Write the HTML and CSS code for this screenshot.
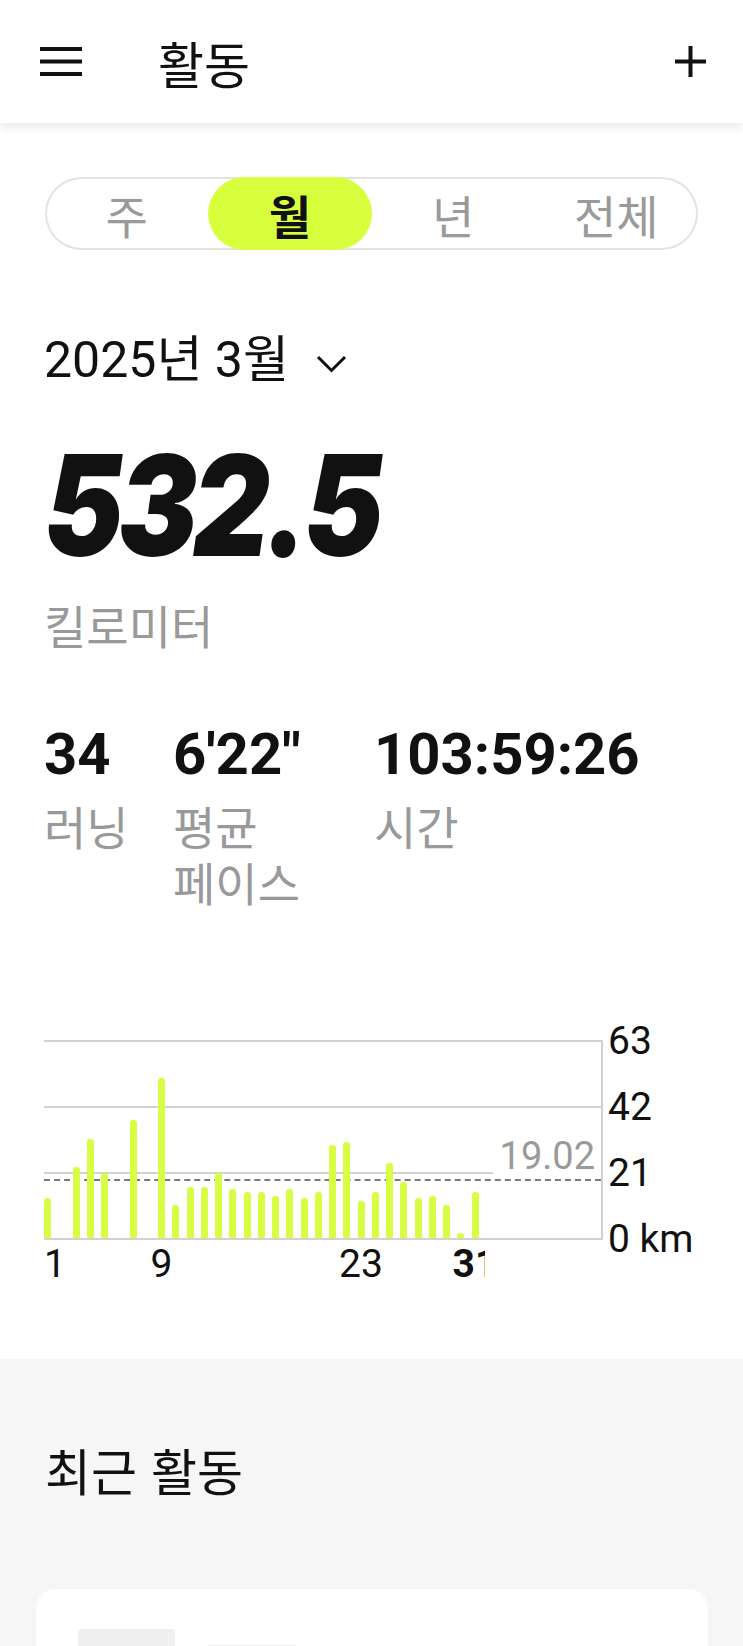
FILE: index.html
```html
<!DOCTYPE html>
<html lang="ko">
<head>
  <meta charset="UTF-8">
  <title>활동</title>
  <link rel="stylesheet" href="styles.css">
</head>
<body>

  <!-- 상단 바 -->
  <header class="topbar">
    <svg class="menu-icon" width="42" height="29" viewBox="0 0 42 29">
      <rect x="0" y="0" width="42" height="4" fill="#111"/>
      <rect x="0" y="12.5" width="42" height="4" fill="#111"/>
      <rect x="0" y="25" width="42" height="4" fill="#111"/>
    </svg>
    <h1 class="title">활동</h1>
    <svg class="add-icon" width="31" height="31" viewBox="0 0 31 31">
      <rect x="13.5" y="0" width="4" height="31" fill="#111"/>
      <rect x="0" y="13.5" width="31" height="4" fill="#111"/>
    </svg>
  </header>

  <main class="summary">
    <div class="tabs">
      <div class="tab">주</div>
      <div class="tab active">월</div>
      <div class="tab">년</div>
      <div class="tab">전체</div>
    </div>

    <div class="period">
      <span>2025년 3월</span>
      <svg class="chevron" width="31" height="18" viewBox="0 0 31 18">
        <polyline points="2,2 15.5,15.5 29,2" fill="none" stroke="#111" stroke-width="3"/>
      </svg>
    </div>

    <div class="distance">532.5</div>
    <div class="unit">킬로미터</div>

    <div class="stats">
      <div class="stat">
        <div class="stat-value">34</div>
        <div class="stat-label">러닝</div>
      </div>
      <div class="stat">
        <div class="stat-value">6'22"</div>
        <div class="stat-label">평균<br>페이스</div>
      </div>
      <div class="stat">
        <div class="stat-value">103:59:26</div>
        <div class="stat-label">시간</div>
      </div>
    </div>

    <!-- 일별 거리 차트 -->
    <div class="chart">
      <div class="chart-col">
        <div class="plot">
          <div class="band"></div>
          <div class="band short"><div class="short-line"></div></div>
          <div class="band"></div>

          <div class="avg-line"></div>
          <div class="avg-label">19.02</div>

          <div class="bars">
            <div class="bar" style="height:39.6px"></div>
            <div class="bar" style="height:0"></div>
            <div class="bar" style="height:71.3px"></div>
            <div class="bar" style="height:99px"></div>
            <div class="bar" style="height:65px"></div>
            <div class="bar" style="height:0"></div>
            <div class="bar" style="height:117.9px"></div>
            <div class="bar" style="height:0"></div>
            <div class="bar" style="height:159.7px"></div>
            <div class="bar" style="height:33px"></div>
            <div class="bar" style="height:51.5px"></div>
            <div class="bar" style="height:51.5px"></div>
            <div class="bar" style="height:65px"></div>
            <div class="bar" style="height:49px"></div>
            <div class="bar" style="height:46.5px"></div>
            <div class="bar" style="height:46.5px"></div>
            <div class="bar" style="height:42.4px"></div>
            <div class="bar" style="height:49px"></div>
            <div class="bar" style="height:39.6px"></div>
            <div class="bar" style="height:46.2px"></div>
            <div class="bar" style="height:93.3px"></div>
            <div class="bar" style="height:96.2px"></div>
            <div class="bar" style="height:36.8px"></div>
            <div class="bar" style="height:46.2px"></div>
            <div class="bar" style="height:74.8px"></div>
            <div class="bar" style="height:55.6px"></div>
            <div class="bar" style="height:39.9px"></div>
            <div class="bar" style="height:42.4px"></div>
            <div class="bar" style="height:33px"></div>
            <div class="bar" style="height:5px"></div>
            <div class="bar" style="height:46.2px"></div>
          </div>
        </div>

        <div class="xlabels">
          <span class="xl xl-1">1</span>
          <span class="xl xl-9">9</span>
          <span class="xl xl-23">23</span>
          <span class="xl xl-31">31</span>
        </div>
      </div>

      <div class="ylabels">
        <div>63</div>
        <div>42</div>
        <div>21</div>
        <div>0 km</div>
      </div>
    </div>
  </main>

  <section class="recent">
    <h2 class="recent-title">최근 활동</h2>
    <div class="card">
      <div class="thumb"></div>
      <div class="line-ph"></div>
    </div>
  </section>

</body>
</html>
```

FILE: styles.css
```css
body {
  margin: 0;
  background-color: #ffffff;
  color: #111;
  font-family: Roboto, "Noto Sans CJK KR", sans-serif;
  width: 743px;
}

/* 상단 바 */
.topbar {
  display: flex;
  align-items: center;
  height: 123px;
  padding: 0 37px 0 40px;
  background-color: #fff;
  box-shadow: 0 4px 10px rgba(0, 0, 0, 0.09);
  position: relative;
  z-index: 1;
}

.title {
  flex: 1;
  margin: 0 0 0 76px;
  font-family: "Noto Sans CJK KR", sans-serif;
  font-size: 50px;
  font-weight: 400;
  line-height: 60px;
}

.summary {
  padding: 0 45px 72px 44px;
}

/* 주 / 월 / 년 / 전체 */
.tabs {
  display: grid;
  grid-template-columns: repeat(4, 1fr);
  height: 73px;
  margin: 54px 0 0 1px;
  border-radius: 37px;
  box-shadow: inset 0 0 0 2px #e3e3e3;
}

.tab {
  display: flex;
  align-items: center;
  justify-content: center;
  font-family: "Noto Sans CJK KR", sans-serif;
  font-size: 46px;
  color: #9a9a9a;
  border-radius: 37px;
}

.tab.active {
  background-color: #d8ff3e;
  color: #111;
  font-weight: 700;
}

.period {
  display: flex;
  align-items: center;
  margin-top: 82px;
  font-size: 50px;
  line-height: 56px;
}

.chevron {
  margin-left: 27px;
  margin-top: 8px;
}

.distance {
  margin-top: 47px;
  font-family: Inter, sans-serif;
  font-size: 140px;
  font-weight: 900;
  font-style: italic;
  line-height: 140px;
  letter-spacing: -6px;
  transform: scaleX(0.85);
  transform-origin: left center;
}

.unit {
  margin-top: 21px;
  font-family: "Noto Sans CJK KR", sans-serif;
  font-size: 46px;
  line-height: 56px;
  color: #999;
}

.stats {
  display: grid;
  grid-template-columns: 129px 201px auto;
  margin-top: 67px;
}

.stat-value {
  font-size: 58px;
  font-weight: 700;
  line-height: 70px;
}

.stat-label {
  margin-top: 8px;
  font-family: "Noto Sans CJK KR", sans-serif;
  font-size: 46px;
  line-height: 56px;
  color: #999;
}

/* 차트 */
.chart {
  display: flex;
  margin-top: 131px;
}

.plot {
  position: relative;
  width: 557px;
  border-top: 2px solid #d2d2d2;
  border-right: 2px solid #d2d2d2;
}

.band {
  height: 64px;
  border-bottom: 2px solid #d2d2d2;
}

.band.short {
  display: flex;
  align-items: flex-end;
  border-bottom: none;
  height: 66px;
}

.short-line {
  width: 449px;
  border-bottom: 2px solid #d2d2d2;
}

.avg-line {
  position: absolute;
  left: 0;
  right: 0;
  top: 137px;
  border-top: 2px dashed #7a7a7a;
}

.avg-label {
  position: absolute;
  right: 6px;
  top: 95px;
  font-size: 38px;
  line-height: 38px;
  color: #9a9a9a;
}

.bars {
  position: absolute;
  left: 0;
  bottom: 2px;
  display: flex;
  align-items: flex-end;
  gap: 7.25px;
}

.bar {
  width: 7px;
  background-color: #d8fd45;
  border-radius: 3px 3px 0 0;
}

/* 날짜 축: 막대와 같은 31칸 격자 */
.xlabels {
  display: grid;
  grid-template-columns: repeat(33, 7px);
  column-gap: 7.25px;
  width: 441px;
  margin-top: 1px;
  overflow: hidden;
  font-size: 39px;
  line-height: 46px;
}

.xl {
  grid-row: 1;
  text-align: center;
}

.xl-1 {
  grid-column: 1 / span 3;
  text-align: left;
}

.xl-9 {
  grid-column: 7 / span 5;
}

.xl-23 {
  grid-column: 21 / span 5;
}

.xl-31 {
  grid-column: 29 / span 5;
  font-weight: 700;
}

.ylabels {
  display: flex;
  flex-direction: column;
  gap: 26px;
  margin: -19px 0 0 5px;
  font-size: 39px;
  line-height: 40px;
  white-space: nowrap;
}

/* 최근 활동 */
.recent {
  background-color: #f6f6f6;
  padding: 80px 35px 0 36px;
}

.recent-title {
  margin: 0 0 0 9px;
  font-family: "Noto Sans CJK KR", sans-serif;
  font-size: 50px;
  font-weight: 400;
  line-height: 60px;
}

.card {
  display: flex;
  align-items: flex-start;
  gap: 33px;
  height: 59px;
  margin-top: 90px;
  padding: 40px 0 0 42px;
  box-sizing: border-box;
  overflow: hidden;
  background-color: #fff;
  border-radius: 20px 20px 0 0;
}

.thumb {
  width: 97px;
  height: 60px;
  background-color: #efefef;
  border-radius: 4px;
}

.line-ph {
  width: 88px;
  height: 40px;
  margin-top: 16px;
  background-color: #efefef;
}
```
